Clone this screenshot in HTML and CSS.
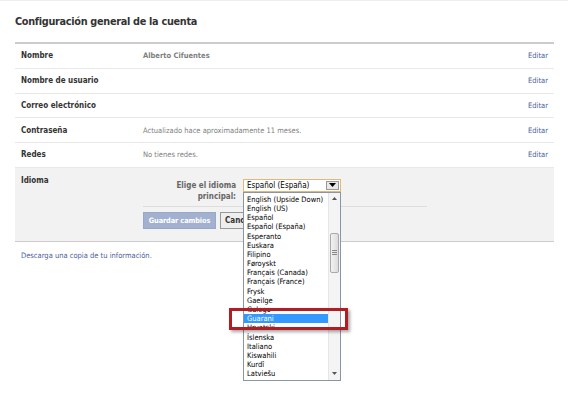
FILE: index.html
```html
<!DOCTYPE html>
<html lang="es">
<head>
<meta charset="utf-8">
<link rel="stylesheet" href="styles.css">
</head>
<body>
<div class="page">
  <h1 class="title">Configuración general de la cuenta</h1>
  <div class="settings">
    <div class="row"><span class="label">Nombre</span><span class="value strong">Alberto Cifuentes</span><a class="edit">Editar</a></div>
    <div class="row"><span class="label">Nombre de usuario</span><span class="value"></span><a class="edit">Editar</a></div>
    <div class="row"><span class="label">Correo electrónico</span><span class="value"></span><a class="edit">Editar</a></div>
    <div class="row"><span class="label">Contraseña</span><span class="value">Actualizado hace aproximadamente 11 meses.</span><a class="edit">Editar</a></div>
    <div class="row"><span class="label">Redes</span><span class="value">No tienes redes.</span><a class="edit">Editar</a></div>
    <div class="lang">
      <span class="label lang-label">Idioma</span>
      <div class="lang-form">
        <div class="field">
          <div class="field-label">Elige el idioma<br>principal:</div>
          <div class="select">
            <span class="select-text">Español (España)</span>
            <span class="select-btn"><svg width="7" height="4" viewBox="0 0 7 4"><path d="M0 0h7L3.5 4z" fill="#000"/></svg></span>
            <div class="listbox">
              <ul class="options">
                <li>English (Upside Down)</li>
                <li>English (US)</li>
                <li>Español</li>
                <li>Español (España)</li>
                <li>Esperanto</li>
                <li>Euskara</li>
                <li>Filipino</li>
                <li>Føroyskt</li>
                <li>Français (Canada)</li>
                <li>Français (France)</li>
                <li>Frysk</li>
                <li>Gaeilge</li>
                <li>Galego</li>
                <li class="selected">Guarani</li>
                <li>Hrvatski</li>
                <li>Íslenska</li>
                <li>Italiano</li>
                <li>Kiswahili</li>
                <li>Kurdî</li>
                <li>Latviešu</li>
              </ul>
              <div class="scrollbar">
                <span class="arrow"><svg width="5" height="3" viewBox="0 0 5 3"><path d="M0 3h5L2.5 0z" fill="#555"/></svg></span>
                <div class="track">
                  <div class="thumb"><span class="grip"></span></div>
                </div>
                <span class="arrow"><svg width="5" height="3" viewBox="0 0 5 3"><path d="M0 0h5L2.5 3z" fill="#555"/></svg></span>
              </div>
              <div class="highlight-box"></div>
            </div>
          </div>
        </div>
        <div class="divider"></div>
        <div class="buttons">
          <button class="btn primary">Guardar cambios</button>
          <button class="btn">Cancelar</button>
        </div>
      </div>
    </div>
  </div>
  <a class="download">Descarga una copia de tu información.</a>
</div>
</body>
</html>
```

FILE: styles.css
```css
* { box-sizing: border-box; }
html, body { margin: 0; padding: 0; background: #fff; min-height: 400px; }
body {
  font-family: "DejaVu Sans Condensed", "DejaVu Sans", sans-serif;
  font-size: 7.5px;
  color: #333;
  border-top: 1px solid #eee;
}
.page {
  width: 539px;
  margin-left: 15px;
}
.title {
  margin: 0;
  height: 41px;
  padding-top: 14px;
  font-size: 10.8px;
  letter-spacing: -0.3px;
  font-weight: bold;
  color: #333;
  line-height: 14px;
}
.settings {
  border-top: 2px solid #ccc;
}
.row {
  display: grid;
  grid-template-columns: 122px 1fr auto;
  align-items: center;
  height: 24.75px;
  padding: 0 6px;
  border-bottom: 1px solid #e9e9e9;
}
.label {
  font-weight: bold;
  font-size: 8px;
  color: #333;
}
.value { color: #808080; }
.value.strong { font-weight: bold; }
.edit { color: #4a62a0; }
.lang {
  display: grid;
  grid-template-columns: 122px 1fr;
  padding: 8px 6px 0;
  height: 74px;
  background: #f2f2f2;
  border-bottom: 1px solid #ccc;
}
.lang-label { line-height: 10px; }
.lang-form { padding-top: 3px; }
.field { display: flex; gap: 7px; }
.field-label {
  width: 93px;
  text-align: right;
  font-weight: bold;
  font-size: 8px;
  color: #666;
  line-height: 11px;
  padding-top: 1px;
}
.select {
  position: relative;
  width: 98px;
  height: 13px;
  background: #fff;
  border: 1px solid #e3b877;
  display: flex;
  align-items: center;
  padding-left: 3px;
  font-size: 8px;
  color: #000;
}
.select-text { flex: 1; }
.select-btn {
  width: 13px;
  height: 9px;
  margin-right: 1px;
  border: 1px solid #999;
  background: #e8e8e8;
  display: flex;
  align-items: center;
  justify-content: center;
}
.listbox {
  position: absolute;
  top: 12px;
  left: -1px;
  width: 98px;
  height: 189px;
  background: #fff;
  border: 1px solid #8895a3;
  display: flex;
  font-size: 7.5px;
  z-index: 5;
}
.options {
  list-style: none;
  margin: 0;
  padding: 2px 0 0;
  flex: 1;
}
.options li {
  height: 9.2px;
  line-height: 9.2px;
  padding-left: 3px;
  color: #000;
  white-space: nowrap;
}
.options li.selected {
  background: #3399ff;
  color: #fff;
}
.scrollbar {
  width: 12px;
  display: flex;
  flex-direction: column;
  background: #f4f4f4;
  border-left: 1px solid #e6e6e6;
}
.arrow {
  height: 12px;
  display: flex;
  align-items: center;
  justify-content: center;
}
.track { flex: 1; padding-top: 28px; }
.thumb {
  height: 40px;
  margin: 0 1px;
  border: 1px solid #a9a9a9;
  border-radius: 2px;
  background: linear-gradient(to right, #f2f2f2, #dcdcdc);
  display: flex;
  align-items: center;
  justify-content: center;
}
.grip {
  width: 5px;
  height: 5px;
  background: repeating-linear-gradient(to bottom, #888 0 1px, transparent 1px 2px);
}
.highlight-box {
  position: absolute;
  left: -15px;
  top: 115px;
  width: 119px;
  height: 22px;
  border: 3px solid #b01e23;
  box-shadow: 2px 2px 3px rgba(0,0,0,0.35);
}
.divider {
  width: 284px;
  height: 1px;
  background: #ddd;
  margin-top: 4px;
}
.buttons {
  display: flex;
  gap: 4px;
  margin-top: 5px;
}
.btn {
  height: 17px;
  padding: 0 4px;
  font-family: "DejaVu Sans Condensed", "DejaVu Sans", sans-serif;
  font-size: 8px;
  font-weight: bold;
  white-space: nowrap;
  border: 1px solid #999;
  background: #eee;
  color: #333;
}
.btn.primary {
  width: 73px;
  padding: 0 2px;
  font-size: 7.3px;
  letter-spacing: -0.1px;
  background: #a3b1d1;
  border-color: #9aa8c8;
  color: #fff;
}
.download {
  display: block;
  margin-top: 9px;
  margin-left: 6px;
  color: #4a62a0;
}
```
